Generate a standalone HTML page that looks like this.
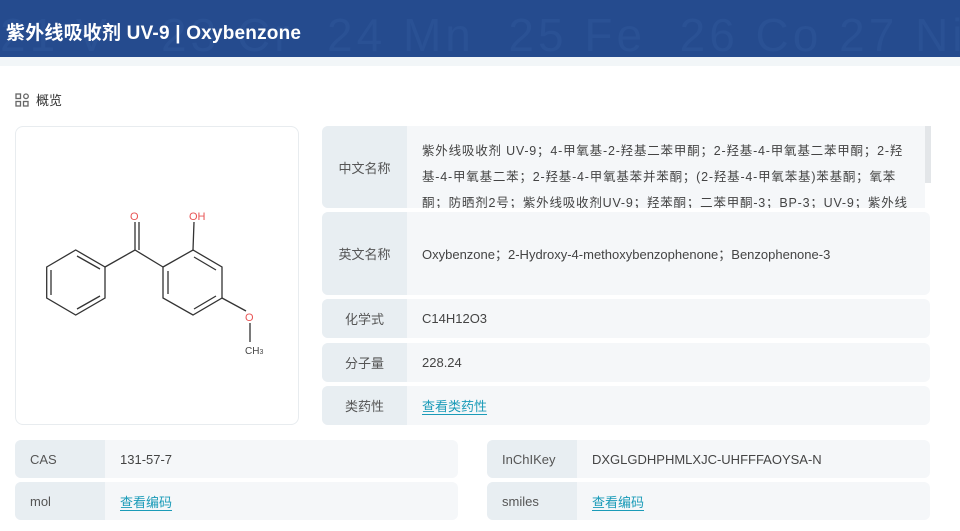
<!DOCTYPE html>
<html><head><meta charset="utf-8"><style>
*{margin:0;padding:0;box-sizing:border-box}
body{width:960px;height:531px;overflow:hidden;background:#fff;font-family:"Liberation Sans","Noto Sans CJK SC",sans-serif;color:#333;position:relative}
.hdr{position:absolute;left:0;top:0;width:960px;height:57px;background:#254b8e;overflow:hidden}
.hdr .bg{position:absolute;top:8px;font-size:46px;color:#2a5194;white-space:nowrap;letter-spacing:4px}
.hdr h1{position:absolute;left:6px;top:18px;font-size:19px;color:#fff;font-weight:bold;white-space:nowrap;letter-spacing:0.2px}
.strip{position:absolute;left:0;top:57px;width:960px;height:9px;background:#f2f6f8}
.ov{position:absolute;left:15px;top:90px;font-size:13px;color:#333;display:flex;align-items:center}
.card{position:absolute;left:15px;top:126px;width:284px;height:299px;border:1px solid #e8ecef;border-radius:8px;background:#fff}
.row{position:absolute;display:flex;border-radius:6px;overflow:hidden;background:#f5f7f9;font-size:13px;color:#444}
.row .l{background:#e8eef2;display:flex;align-items:center;justify-content:center;color:#555;flex:none}
.row .c{display:flex;align-items:center;padding-left:15px}
.b .l{justify-content:flex-start;padding-left:15px}
a{color:#1a9bb8;text-decoration:underline;text-underline-offset:3px}
</style></head><body>
<div class="hdr"><div class="bg">21 V&nbsp;&nbsp;&nbsp;23 Cr&nbsp;&nbsp;24 Mn&nbsp;&nbsp;25 Fe&nbsp;&nbsp;26 Co&nbsp;27 Ni&nbsp;28 Cu</div>
<h1>紫外线吸收剂 UV-9 | Oxybenzone</h1></div>
<div class="strip"></div>
<div class="ov"><svg width="14" height="14" viewBox="0 0 14 14" fill="none" stroke="#666" stroke-width="1.3"><rect x="1" y="1" width="4.5" height="4.5"/><circle cx="11" cy="3.3" r="2.3"/><rect x="1" y="8.5" width="4.5" height="4.5"/><rect x="8.5" y="8.5" width="4.5" height="4.5"/></svg><span style="margin-left:7px">概览</span></div>
<div class="card"></div>
<svg style="position:absolute;left:0;top:0" width="300" height="430" fill="none" stroke="#333" stroke-width="1.3">
<path d="M46.7 267L75.7 250L105 267L105 298L75.7 315L46.7 298Z"/>
<path d="M51 270L51 295M77 256L100 269M77 309L100 296"/>
<path d="M105 267L135 250L163 267M135 250L135 222M139 250L139 222" />
<path d="M163 267L193 250L222 267L222 298L193 315L163 298Z"/>
<path d="M168 271L168 294M194 257L216 270M194 309L216 296"/>
<path d="M193 250L194 222M222 298L246 311M250 323L250 342"/>
<text x="130" y="220" font-size="11" fill="#e85555" stroke="none" font-family="Liberation Sans">O</text>
<text x="189" y="220" font-size="11" fill="#e85555" stroke="none" font-family="Liberation Sans">OH</text>
<text x="245" y="321" font-size="11" fill="#e85555" stroke="none" font-family="Liberation Sans">O</text>
<text x="245" y="354" font-size="10" fill="#444" stroke="none" font-family="Liberation Sans">CH<tspan font-size="7">3</tspan></text>
</svg>
<div class="row" style="left:322px;top:126px;width:603px;height:82px;border-radius:6px 0 0 6px"><div class="l" style="width:85px">中文名称</div><div class="c" style="display:block;padding-top:12px;line-height:26px;font-size:12.5px;width:518px;white-space:nowrap;overflow:hidden;height:82px;letter-spacing:0.8px">紫外线吸收剂 UV-9；4-甲氧基-2-羟基二苯甲酮；2-羟基-4-甲氧基二苯甲酮；2-羟<br>基-4-甲氧基二苯；2-羟基-4-甲氧基苯并苯酮；(2-羟基-4-甲氧苯基)苯基酮；氧苯<br>酮；防晒剂2号；紫外线吸收剂UV-9；羟苯酮；二苯甲酮-3；BP-3；UV-9；紫外线</div></div>
<div style="position:absolute;left:925px;top:126px;width:6px;height:57px;background:#e3e6e9"></div>
<div class="row" style="left:322px;top:212px;width:608px;height:83px"><div class="l" style="width:85px">英文名称</div><div class="c">Oxybenzone；2-Hydroxy-4-methoxybenzophenone；Benzophenone-3</div></div>
<div class="row" style="left:322px;top:299px;width:608px;height:39px"><div class="l" style="width:85px">化学式</div><div class="c">C14H12O3</div></div>
<div class="row" style="left:322px;top:343px;width:608px;height:39px"><div class="l" style="width:85px">分子量</div><div class="c">228.24</div></div>
<div class="row" style="left:322px;top:386px;width:608px;height:39px"><div class="l" style="width:85px">类药性</div><div class="c"><a>查看类药性</a></div></div>
<div class="row b" style="left:15px;top:440px;width:443px;height:38px"><div class="l" style="width:90px">CAS</div><div class="c">131-57-7</div></div>
<div class="row b" style="left:15px;top:482px;width:443px;height:38px"><div class="l" style="width:90px">mol</div><div class="c"><a>查看编码</a></div></div>
<div class="row b" style="left:487px;top:440px;width:443px;height:38px"><div class="l" style="width:90px">InChIKey</div><div class="c">DXGLGDHPHMLXJC-UHFFFAOYSA-N</div></div>
<div class="row b" style="left:487px;top:482px;width:443px;height:38px"><div class="l" style="width:90px">smiles</div><div class="c"><a>查看编码</a></div></div>
</body></html>
